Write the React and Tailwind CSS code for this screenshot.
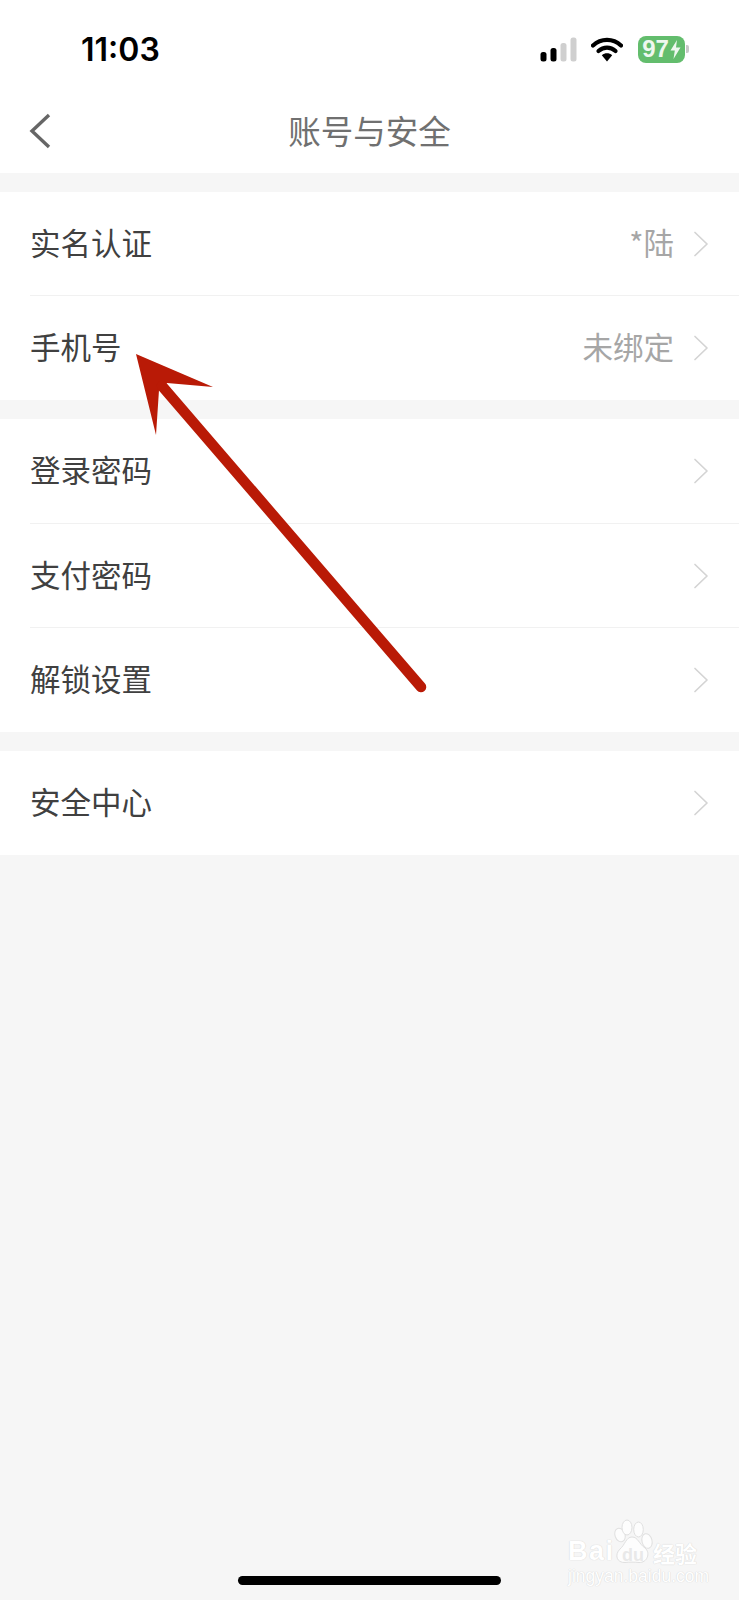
import React from "react";

const cjk = { fontFamily: '"Noto Sans CJK SC", "Noto Sans", sans-serif' };

function Chevron() {
  return (
    <svg width="16" height="26" viewBox="0 0 16 26" fill="none" className="shrink-0">
      <path d="M2 1.5 L14 13 L2 24.5" stroke="#d4d4d4" strokeWidth="1.7" strokeLinecap="round" strokeLinejoin="round" />
    </svg>
  );
}

function Row({ label, value, last, tall }) {
  return (
    <div className={`pl-[30px] ${tall ? "h-[105px]" : "h-[104px]"}`}>
      <div className={`h-full flex items-center pr-[30px] ${last ? "" : "border-b border-[#f1f1f1]"}`}>
        <span className="mb-[3px] text-[30.5px] leading-none text-[#404040] font-normal">{label}</span>
        <span className="mb-[3px] ml-auto text-[30.5px] leading-none text-[#a6a6a6]">{value}</span>
        <span className="ml-[19px]"><Chevron /></span>
      </div>
    </div>
  );
}

function StatusIcons() {
  return (
    <div className="flex items-center">
      <svg width="37" height="25" viewBox="0 0 37 25" className="shrink-0">
        <rect x="0.5" y="15" width="6" height="9.5" rx="2.5" fill="#000" />
        <rect x="10.5" y="11" width="6" height="13.5" rx="2.5" fill="#000" />
        <rect x="20.5" y="6" width="6" height="18.5" rx="2.5" fill="#cfcfcf" />
        <rect x="30.5" y="0.5" width="6" height="24" rx="2.5" fill="#cfcfcf" />
      </svg>
      <svg width="32" height="25" viewBox="0 0 32 25" className="shrink-0 ml-[14px]">
        <path d="M2 8.5 C10 1 22 1 30 8.5" stroke="#000" strokeWidth="4.2" fill="none" strokeLinecap="round" />
        <path d="M7.5 14 C12.5 9.5 19.5 9.5 24.5 14" stroke="#000" strokeWidth="4.2" fill="none" strokeLinecap="round" />
        <path d="M10.8 18.2 C14 15.6 18 15.6 21.2 18.2 L16 24.5 Z" fill="#000" />
      </svg>
      <div className="ml-[15px] w-[47px] h-[27px] rounded-[8px] bg-[#63bd6d] flex items-center justify-center gap-[1px] text-[#eef8ef]">
        <span className="text-[24px] leading-none font-bold" style={{ fontFamily: '"Liberation Sans", sans-serif' }}>97</span>
        <svg width="11" height="19" viewBox="0 0 11 19" className="shrink-0">
          <path d="M7 0 L0.5 10.5 H4.8 L3.5 19 L10.5 7.5 H6 Z" fill="#eef8ef" />
        </svg>
      </div>
      <div className="ml-[1px] w-[3px] h-[8px] rounded-r-[2px] bg-[#c8c8c8]" />
    </div>
  );
}

function Watermark() {
  const shadow = { textShadow: "0 0 1px #d8d8d8, 0 0 1px #d8d8d8" };
  return (
    <div className="absolute left-[567px] top-[1518px] w-[134px] h-[66px] text-white select-none">
      <svg width="44" height="47" viewBox="0 0 44 47" className="absolute left-[44px] top-0">
        <g fill="#fdfdfd" stroke="#e0e0e0" strokeWidth="1">
          <ellipse cx="9" cy="17" rx="5" ry="7" transform="rotate(-20 9 17)" />
          <ellipse cx="16" cy="9.5" rx="5" ry="7.5" />
          <ellipse cx="27.5" cy="11.5" rx="4.8" ry="7.5" />
          <ellipse cx="36" cy="23" rx="5" ry="7.5" transform="rotate(-15 36 23)" />
          <path d="M21 19 C27 19 28 26 34 30 C40 35 36 45 28 44.5 C24 44 18 44 14 44.5 C6 45 3 37 9 31 C14 27 15 19 21 19 Z" />
        </g>
      </svg>
      <span className="absolute left-[1px] top-[20px] text-[27px] leading-none font-bold tracking-[1.5px]" style={{ fontFamily: '"Liberation Sans", sans-serif', ...shadow }}>Bai</span>
      <span className="absolute left-[55px] top-[28px] text-[18px] leading-none font-bold text-[#e9e9e9]" style={{ fontFamily: '"Liberation Sans", sans-serif' }}>du</span>
      <span className="absolute left-[86px] top-[23px] text-[22px] leading-none font-bold" style={{ ...cjk, ...shadow }}>经验</span>
      <span className="absolute left-[1px] top-[50px] text-[17.5px] leading-none" style={{ fontFamily: '"Liberation Sans", sans-serif', ...shadow }}>jingyan.baidu.com</span>
    </div>
  );
}

export default function App() {
  return (
    <div className="relative w-[739px] h-[1600px] overflow-hidden bg-[#f6f6f6] flex flex-col gap-[19px]" style={cjk}>
      <header className="h-[173px] bg-white shrink-0">
        <div className="h-[100px] pl-[81px] pr-[50px] flex items-center justify-between">
          <span className="text-[32px] leading-none font-semibold text-black" style={{ fontFamily: 'Inter, "Liberation Sans", sans-serif' }}>11:03</span>
          <div className="-mt-[2px]"><StatusIcons /></div>
        </div>
        <div className="relative h-[73px] flex items-start justify-center">
          <svg width="22" height="36" viewBox="0 0 22 36" className="absolute left-[29px] top-[13px]">
            <path d="M20 2 L3 18 L20 34" stroke="#666" strokeWidth="3.4" fill="none" />
          </svg>
          <h1 className="text-[32.5px] leading-[60px] font-normal text-[#707070]">账号与安全</h1>
        </div>
      </header>

      <section className="bg-white shrink-0">
        <Row label="实名认证" value="*陆" />
        <Row label="手机号" value="未绑定" last />
      </section>

      <section className="bg-white shrink-0">
        <Row label="登录密码" tall />
        <Row label="支付密码" />
        <Row label="解锁设置" last />
      </section>

      <section className="bg-white shrink-0">
        <Row label="安全中心" last />
      </section>

      {/* annotation arrow */}
      <svg width="739" height="1600" viewBox="0 0 739 1600" className="absolute left-0 top-0 pointer-events-none">
        <path d="M136 354 L213 387 L167 383 L159 390 L156 435 Z" fill="#b91a06" />
        <path d="M162 386 L421 687" stroke="#b91a06" strokeWidth="10.5" strokeLinecap="round" />
      </svg>

      <Watermark />

      <div className="absolute left-[238px] top-[1576px] w-[263px] h-[9px] rounded-full bg-black" />
    </div>
  );
}
